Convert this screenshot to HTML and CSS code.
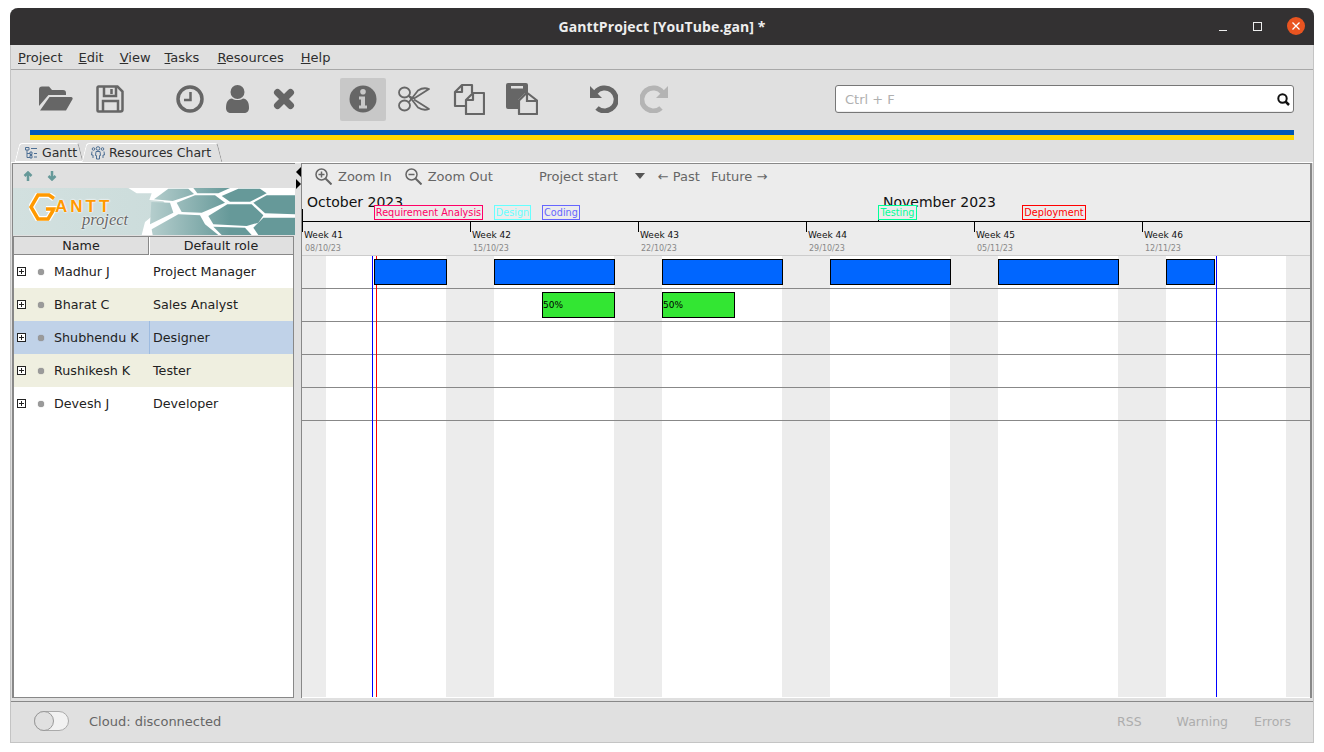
FILE: index.html
```html
<!DOCTYPE html>
<html lang="en">
<head>
    <meta charset="UTF-8">
    <title>GanttProject [YouTube.gan] *</title>
    <link rel="stylesheet" href="styles.css">
</head>
<body>
<div class="window">
    <div class="titlebar">
        <span class="title">GanttProject [YouTube.gan] *</span>
        <div class="win-btns">
            <svg class="win-min" width="9" height="9" viewBox="0 0 9 9"><path d="M0 8.500h8" stroke="#eee" stroke-width="1"/></svg>
            <svg class="win-max" width="9" height="9" viewBox="0 0 9 9"><rect x=".5" y=".5" width="8" height="8" fill="none" stroke="#eee"/></svg>
            <svg class="win-close" width="18" height="18" viewBox="0 0 18 18"><circle cx="9" cy="9" r="9" fill="#e95420"/><path d="M5.500 5.500l7 7M12.500 5.500l-7 7" stroke="#fff" stroke-width="1.300"/></svg>
        </div>
    </div>

    <div class="menubar">
        <span><u>P</u>roject</span>
        <span><u>E</u>dit</span>
        <span><u>V</u>iew</span>
        <span class="menu-tasks"><u>T</u>asks</span>
        <span><u>R</u>esources</span>
        <span class="menu-help"><u>H</u>elp</span>
    </div>

    <div class="toolbar">
        <div class="tool-group group-file">
            <div class="tool">
                <svg width="34" height="25" viewBox="0 0 34 25"><path d="M0 3.500a3 3 0 0 1 3-3h7l3 3.500h11a3 3 0 0 1 3 3V9H9.500L0 20z" fill="#666"/><path d="M10.500 11H32a1.500 1.500 0 0 1 1.500 2.200L27 24.500H1z" fill="#666"/></svg>
            </div>
            <div class="tool">
                <svg width="28" height="28" viewBox="0 0 28 28" fill="none" stroke="#666" stroke-width="2.500"><path d="M2.500 1.500h19l5 5v18a2 2 0 0 1-2 2h-22a1 1 0 0 1-1-1v-23a1 1 0 0 1 1-1z"/><path d="M8 2v9h12V2M15.500 4v5M7 26V16h15v10"/></svg>
            </div>
        </div>
        <div class="tool-group group-task">
            <div class="tool">
                <svg width="28" height="28" viewBox="0 0 28 28" fill="none" stroke="#666" stroke-width="3.500"><circle cx="14" cy="14" r="12"/><path d="M14.500 7v8H8" stroke-width="2.500"/></svg>
            </div>
            <div class="tool">
                <svg width="23" height="28" viewBox="0 0 23 28" fill="#666"><circle cx="11.500" cy="7" r="7"/><path d="M0 23c0-6 2-9 6-9.500 3 2 8 2 11 0 4 .5 6 3.500 6 9.500 0 3-2 5-5 5H5c-3 0-5-2-5-5z"/></svg>
            </div>
            <div class="tool">
                <svg width="22" height="22" viewBox="0 0 22 22"><path d="M4.500 4.500l13 13M17.500 4.500l-13 13" stroke="#666" stroke-width="7" stroke-linecap="round"/></svg>
            </div>
        </div>
        <div class="tool-group group-edit">
            <div class="tool tool-active">
                <svg width="28" height="28" viewBox="0 0 28 28"><circle cx="14" cy="14" r="13.500" fill="#666"/><circle cx="14" cy="6.800" r="2.800" fill="#c8c8c8"/><path d="M10 11.500h6v9h2v3h-8v-3h2v-6h-2z" fill="#c8c8c8"/></svg>
            </div>
            <div class="tool tool-scissors">
                <svg width="32" height="26" viewBox="0 0 32 26" fill="none" stroke="#666" stroke-width="1.800" stroke-linejoin="round"><ellipse cx="6.500" cy="6.500" rx="5.500" ry="5"/><ellipse cx="6.500" cy="19.500" rx="5.500" ry="5"/><path d="M10.500 10l5.500 2.500L31 3c-4-1.500-8-.5-11 1.500L11 16"/><path d="M11 10l9 11.500c3 2 7 3 11 1.500L16 13.500"/></svg>
            </div>
            <div class="tool">
                <svg width="32" height="32" viewBox="0 0 32 32" fill="none" stroke="#666" stroke-width="2.200" stroke-linejoin="round"><path d="M13 23H2V9l7-7h10v8"/><path d="M9 2v7H2"/><path d="M13 31V17l7-7h11v21z"/><path d="M20 10v7h-7"/></svg>
            </div>
            <div class="tool">
                <svg width="32" height="32" viewBox="0 0 32 32"><path d="M2 0h18a2 2 0 0 1 2 2v8h-3l-7 7v9H2a2 2 0 0 1-2-2V2a2 2 0 0 1 2-2z" fill="#666"/><rect x="5" y="3" width="12" height="2.500" fill="#e0e0e0"/><path d="M13 31V17.500l7-7h2l9 7V31z" fill="none" stroke="#666" stroke-width="2.200" stroke-linejoin="round"/><path d="M21 11v7h9" fill="none" stroke="#666" stroke-width="2.200"/></svg>
            </div>
        </div>
        <div class="tool-group group-undo">
            <div class="tool">
                <svg width="28" height="28" viewBox="0 0 28 28"><path d="M5.500 7.500A11.500 11.500 0 1 1 7 23" fill="none" stroke="#666" stroke-width="5"/><path d="M0 1l12 12H0z" fill="#666"/></svg>
            </div>
            <div class="tool">
                <svg width="28" height="28" viewBox="0 0 28 28"><path d="M22.500 7.500A11.500 11.500 0 1 0 21 23" fill="none" stroke="#b4b4b4" stroke-width="5"/><path d="M28 1L16 13h12z" fill="#b4b4b4"/></svg>
            </div>
        </div>
        <div class="search">
            <span class="search-hint">Ctrl + F</span>
            <svg width="13" height="13" viewBox="0 0 13 13" fill="none" stroke="#111" stroke-width="2"><circle cx="5.500" cy="5.500" r="4.200"/><path d="M8.500 8.500l3.500 3.500" stroke-width="2.500"/></svg>
        </div>
    </div>

    <div class="stripes">
        <div class="stripe-blue"></div>
        <div class="stripe-yellow"></div>
    </div>

    <div class="tabs">
        <div class="tab tab-gantt">
            <svg width="12" height="12" viewBox="0 0 12 12" fill="none" stroke="#4d6f94"><path d="M.5.500h3.500v2.500H.5zM2 3v7.500h3M2 6.500h3M5 8.500h2v2.500H5zM5 5h2v2.500H5zM6 1.500h6M9 6.500h3M9 10h3"/></svg>
            <span>Gantt</span>
        </div>
        <div class="tab tab-res">
            <svg width="14" height="14" viewBox="0 0 14 14" fill="none" stroke="#4d6f94"><circle cx="7" cy="2.500" r="1.800"/><path d="M5 5.500h4l.5 4H8.500V13h-3V9.500h-1z"/><circle cx="2.500" cy="3" r="1.300"/><path d="M1 5.500L.5 9H2v3"/><circle cx="11.500" cy="3" r="1.300"/><path d="M13 5.500l.5 3.500H12v3"/></svg>
            <span>Resources Chart</span>
        </div>
    </div>

    <div class="main">
        <div class="left-panel">
            <div class="left-tools">
                <svg width="10" height="10" viewBox="0 0 10 10" fill="none" stroke="#669999" stroke-width="2.500"><path d="M5 10V2M1.500 5L5 1.500 8.500 5"/></svg>
                <svg width="10" height="10" viewBox="0 0 10 10" fill="none" stroke="#669999" stroke-width="2.500"><path d="M5 0v8M1.500 5L5 8.500 8.500 5"/></svg>
            </div>
            <div class="banner">
                <svg class="hexes" width="282" height="47" viewBox="-411 6 846 141">
                    <defs>
                        <linearGradient id="cell" gradientUnits="userSpaceOnUse" x1="-50" y1="0" x2="240" y2="0">
                            <stop offset="0" stop-color="#c6d9d8"/>
                            <stop offset="1" stop-color="#669999"/>
                        </linearGradient>
                    </defs>
                    <path d="M-65 6H435V147H-25L-15 108 48 56 40 46-2 42 5 22H-40z" fill="#fff"/>
                    <g fill="url(#cell)">
                        <path d="M12 40L55 8H115L132 24 68 45z"/>
                        <path d="M130 6H240L205 22H142z"/>
                        <path d="M80 50L135 28H195L225 50 155 80 95 78z"/>
                        <path d="M215 30L265 8H330L350 22 300 47H240z"/>
                        <path d="M310 50L350 28H435V85L345 82z"/>
                        <path d="M175 90L232 55H305L340 88 325 110 290 120 190 115z"/>
                        <path d="M310 125L340 95H435V147H325z"/>
                        <path d="M4 48L60 50 70 80 0 115z"/>
                        <path d="M5 130L85 85 150 88 165 115 205 147H8z"/>
                        <path d="M215 147L190 122 285 125 305 147z"/>
                    </g>
                </svg>
                <svg class="logo-mark" width="28" height="28" viewBox="0 0 28 28" fill="none" stroke-linejoin="miter"><path d="M25 5.500L20 2H9L2 14l7 12h10l6-10h-8" stroke="#fff" stroke-width="6"/><path d="M25 5.500L20 2H9L2 14l7 12h10l6-10h-8" stroke="#ff9900" stroke-width="3.500"/></svg>
                <span class="logo-word">ANTT</span>
                <span class="logo-sub">project</span>
            </div>
            <div class="res-table">
                <div class="res-head">
                    <div>Name</div>
                    <div>Default role</div>
                </div>
                <div class="res-row">
                    <div class="res-name"><span class="expander"></span><span class="dot"></span>Madhur J</div>
                    <div class="res-role">Project Manager</div>
                </div>
                <div class="res-row alt">
                    <div class="res-name"><span class="expander"></span><span class="dot"></span>Bharat C</div>
                    <div class="res-role">Sales Analyst</div>
                </div>
                <div class="res-row selected">
                    <div class="res-name"><span class="expander"></span><span class="dot"></span>Shubhendu K</div>
                    <div class="res-role">Designer</div>
                </div>
                <div class="res-row alt">
                    <div class="res-name"><span class="expander"></span><span class="dot"></span>Rushikesh K</div>
                    <div class="res-role">Tester</div>
                </div>
                <div class="res-row">
                    <div class="res-name"><span class="expander"></span><span class="dot"></span>Devesh J</div>
                    <div class="res-role">Developer</div>
                </div>
            </div>
        </div>

        <div class="splitter">
            <span class="arrow-left"></span>
            <span class="arrow-right"></span>
        </div>

        <div class="chart">
            <div class="chart-tools">
                <svg class="zoom-in" width="17" height="17" viewBox="0 0 17 17" fill="none" stroke="#666" stroke-width="1.500"><circle cx="6.500" cy="6.500" r="5.500"/><path d="M10.500 10.500l6 6" stroke-width="2"/><path d="M6.500 3.500v6M3.500 6.500h6"/></svg>
                <span class="zoom-label">Zoom In</span>
                <svg class="zoom-out" width="17" height="17" viewBox="0 0 17 17" fill="none" stroke="#666" stroke-width="1.500"><circle cx="6.500" cy="6.500" r="5.500"/><path d="M10.500 10.500l6 6" stroke-width="2"/><path d="M3.500 6.500h6"/></svg>
                <span class="zoom-label">Zoom Out</span>
                <span class="project-start">Project start</span>
                <span class="caret"></span>
                <span class="past">← Past</span>
                <span class="future">Future →</span>
            </div>

            <div class="timeline">
                <span class="month month-oct">October 2023</span>
                <span class="month month-nov">November 2023</span>
                <span class="month-tick tick-oct"></span>
                <span class="month-tick tick-nov"></span>
                <span class="milestone ms-req">Requirement Analysis</span>
                <span class="milestone ms-design">Design</span>
                <span class="milestone ms-coding">Coding</span>
                <span class="milestone ms-testing">Testing</span>
                <span class="milestone ms-deploy">Deployment</span>
                <div class="weeks">
                    <div class="week"><b>Week 41</b><small>08/10/23</small></div>
                    <div class="week"><b>Week 42</b><small>15/10/23</small></div>
                    <div class="week"><b>Week 43</b><small>22/10/23</small></div>
                    <div class="week"><b>Week 44</b><small>29/10/23</small></div>
                    <div class="week"><b>Week 45</b><small>05/11/23</small></div>
                    <div class="week"><b>Week 46</b><small>12/11/23</small></div>
                </div>
            </div>

            <div class="chart-body">
                <div class="chart-row">
                    <div class="bar blue" style="left:72px;width:73px"></div>
                    <div class="bar blue" style="left:192px;width:121px"></div>
                    <div class="bar blue" style="left:360px;width:121px"></div>
                    <div class="bar blue" style="left:528px;width:121px"></div>
                    <div class="bar blue" style="left:696px;width:121px"></div>
                    <div class="bar blue" style="left:864px;width:49px"></div>
                </div>
                <div class="chart-row">
                    <div class="bar green" style="left:240px;width:73px">50%</div>
                    <div class="bar green" style="left:360px;width:73px">50%</div>
                </div>
                <div class="chart-row"></div>
                <div class="chart-row"></div>
                <div class="chart-row"></div>
                <div class="vline line-blue" style="left:70px"></div>
                <div class="vline line-red" style="left:74px"></div>
                <div class="vline line-blue" style="left:914px"></div>
            </div>
        </div>
    </div>

    <div class="statusbar">
        <span class="toggle"><span class="toggle-knob"></span></span>
        <span class="cloud">Cloud: disconnected</span>
        <span class="status-link rss">RSS</span>
        <span class="status-link warn">Warning</span>
        <span class="status-link errs">Errors</span>
    </div>
</div>
</body>
</html>
```

FILE: styles.css
```css
* {
    box-sizing: border-box;
}
body {
    margin: 0;
    padding: 8px 10px;
    background: #fff;
    font-family: "DejaVu Sans", sans-serif;
    font-size: 13px;
    color: #333;
    overflow: hidden;
}
.window {
    width: 1304px;
    height: 735px;
    display: flex;
    flex-direction: column;
    background: #e0e0e0;
    border-left: 1px solid #c4c4c4;
    border-right: 1px solid #c4c4c4;
    border-bottom: 1px solid #c4c4c4;
    border-radius: 8px 8px 0 0;
}

/* title bar */
.titlebar {
    height: 37px;
    flex: none;
    margin: 0 -1px;
    display: flex;
    align-items: center;
    justify-content: center;
    position: relative;
    background: #333132;
    border-radius: 8px 8px 0 0;
}
.title {
    font-family: "Open Sans", sans-serif;
    font-weight: 700;
    font-size: 14px;
    letter-spacing: .1px;
    color: #eee;
}
.win-btns {
    position: absolute;
    right: 9px;
    top: 9px;
    display: flex;
    align-items: center;
}
.win-min {
    margin-right: 25px;
}
.win-max {
    margin-right: 25px;
}

/* menu */
.menubar {
    height: 25px;
    flex: none;
    display: flex;
    align-items: center;
    gap: 16px;
    padding-left: 7px;
    border-bottom: 1px solid #a8a8a8;
    color: #2e2e2e;
}
.menu-tasks {
    margin: 0 2px 0 -2px;
}
.menu-help {
    margin-left: 1px;
}

/* toolbar */
.toolbar {
    height: 60px;
    flex: none;
    display: flex;
    align-items: flex-start;
    padding: 8px 19px 0 22px;
}
.tool-group {
    display: flex;
}
.tool {
    width: 46px;
    height: 43px;
    padding-bottom: 2px;
    display: flex;
    align-items: center;
    justify-content: center;
    border-radius: 2px;
}
.tool-active {
    background: #c8c8c8;
}
.tool-scissors {
    margin: 0 2px 0 -2px;
}
.group-file {
    gap: 8px;
}
.group-task {
    gap: 1px;
    margin-left: 34px;
}
.group-edit {
    gap: 7px;
    margin-left: 33px;
}
.group-undo {
    gap: 4px;
    margin-left: 36px;
}
.search {
    width: 459px;
    height: 28px;
    margin: 7px 0 0 auto;
    padding: 0 3px 0 9px;
    display: flex;
    align-items: center;
    justify-content: space-between;
    background: #fff;
    border: 1px solid #777;
    border-radius: 3px;
    box-shadow: inset 0 -1px 0 #eee;
}
.search-hint {
    color: #b0b0b0;
}

.stripes {
    flex: none;
    margin: 0 19px;
}
.stripe-blue {
    height: 5px;
    background: #0057b7;
}
.stripe-yellow {
    height: 5px;
    background: #ffd700;
}

/* tabs */
.tabs {
    height: 19px;
    flex: none;
    margin-top: 3px;
    padding-left: 4px;
    display: flex;
    font-size: 12.500px;
}
.tab {
    position: relative;
    display: flex;
    align-items: center;
    height: 19px;
    color: #2e2e2e;
}
.tab::before,
.tab::after {
    content: "";
    position: absolute;
    top: 0;
    bottom: 0;
    width: 50%;
    border-top: 1px solid #fff;
}
.tab::before {
    left: 2px;
    border-left: 1px solid #fff;
    border-radius: 3px 0 0 0;
    transform: skewX(-14deg);
}
.tab::after {
    right: 2px;
    border-right: 1px solid #999;
    border-radius: 0 3px 0 0;
    transform: skewX(14deg);
}
.tab-gantt {
    width: 67px;
    padding-left: 10px;
    gap: 5px;
    box-shadow: inset 0 -1px 0 #fff;
}
.tab-res {
    width: 140px;
    padding-left: 9px;
    gap: 4px;
}

/* main area */
.main {
    height: 539px;
    flex: none;
    display: flex;
    padding: 0 1px 3px 1px;
    border-top: 1px solid #fff;
}

.left-panel {
    width: 283px;
    flex: none;
    display: flex;
    flex-direction: column;
    border-top: 1px solid #888;
    border-left: 1px solid #888;
}
.left-tools {
    height: 24px;
    flex: none;
    display: flex;
    align-items: center;
    gap: 14px;
    padding-left: 10px;
}
.banner {
    height: 47px;
    flex: none;
    position: relative;
    overflow: hidden;
    background: linear-gradient(90deg, #d2e0df 0%, #c6d9d8 100%);
}
.hexes {
    position: absolute;
    left: 0;
    top: 0;
}
.logo-mark {
    position: absolute;
    left: 16px;
    top: 5px;
}
.logo-word {
    position: absolute;
    left: 42px;
    top: 10px;
    font-family: "Liberation Sans", sans-serif;
    font-weight: 700;
    font-size: 17px;
    line-height: 18px;
    letter-spacing: 3px;
    color: #ff9900;
    text-shadow: 0 0 2px #fff, 0 0 2px #fff;
}
.logo-sub {
    position: absolute;
    left: 69px;
    top: 23px;
    font-family: "Liberation Serif", serif;
    font-style: italic;
    font-size: 16.500px;
    line-height: 18px;
    color: #666;
    text-shadow: 0 0 2px #fff, 0 0 2px #fff;
}
.res-table {
    flex: 1;
    width: 281px;
    margin-top: 1px;
    background: #fff;
    border: 1px solid #888;
    font-size: 12.700px;
}
.res-head {
    height: 18px;
    display: grid;
    grid-template-columns: 134px 1fr;
    background: #e0e0e0;
    border-bottom: 1px solid #888;
    line-height: 18px;
    text-align: center;
    color: #222;
}
.res-head div + div {
    border-left: 1px solid #888;
    box-shadow: inset 1px 0 0 #fff;
}
.res-row {
    height: 33px;
    display: grid;
    grid-template-columns: 135px 1fr;
    align-items: stretch;
    line-height: 33px;
    color: #222;
}
.alt {
    background: #efefe0;
}
.selected {
    background: #c0d2e8;
}
.selected .res-role {
    border-left: 1px solid #9dbbe0;
    padding-left: 3px;
}
.res-name {
    display: flex;
    align-items: center;
    padding-left: 3px;
}
.res-role {
    padding-left: 4px;
}
.expander {
    position: relative;
    width: 9px;
    height: 9px;
    flex: none;
    background: #fff;
    border: 1px solid #222;
}
.expander::before {
    content: "";
    position: absolute;
    left: 1px;
    top: 3px;
    width: 5px;
    height: 1px;
    background: #222;
}
.expander::after {
    content: "";
    position: absolute;
    left: 3px;
    top: 1px;
    width: 1px;
    height: 5px;
    background: #222;
}
.dot {
    width: 6px;
    height: 6px;
    flex: none;
    margin: 0 10px 0 12px;
    border-radius: 50%;
    background: #9a9a9a;
    box-shadow: 0 0 1px #777;
}

.splitter {
    width: 6px;
    flex: none;
    display: flex;
    flex-direction: column;
    gap: 2px;
    padding-top: 4px;
}
.arrow-left {
    width: 0;
    height: 0;
    margin-left: 1px;
    border: 5px solid transparent;
    border-left: none;
    border-right: 5px solid #000;
}
.arrow-right {
    width: 0;
    height: 0;
    margin-left: 1px;
    border: 5px solid transparent;
    border-right: none;
    border-left: 5px solid #000;
}

/* chart */
.chart {
    flex: 1;
    min-width: 0;
    display: flex;
    flex-direction: column;
    background: #fff;
    border-top: 1px solid #888;
    border-left: 1px solid #888;
    border-right: 2px solid #888;
}
.chart-tools {
    height: 26px;
    flex: none;
    display: flex;
    align-items: center;
    padding: 0 0 2px 13px;
    background: #ececec;
    color: #666;
}
.zoom-label {
    margin-left: 6px;
}
.zoom-out {
    margin-left: 13px;
}
.project-start {
    margin-left: 46px;
}
.caret {
    margin-left: 17px;
    border: 5px solid transparent;
    border-top: 6px solid #555;
    border-bottom: none;
}
.past {
    margin-left: 13px;
}
.future {
    margin-left: 11px;
}
.timeline {
    height: 65px;
    flex: none;
    position: relative;
    width: 1008px;
    padding-top: 31px;
    background: #ececec;
}
.month {
    position: absolute;
    top: 3px;
    font-size: 14px;
    line-height: 18px;
    color: #111;
}
.month-oct {
    left: 5px;
}
.month-nov {
    left: 581px;
}
.month-tick {
    position: absolute;
    top: 19px;
    width: 1px;
    height: 12px;
    background: #000;
}
.tick-oct {
    left: 0;
}
.tick-nov {
    left: 576px;
}
.milestone {
    position: absolute;
    top: 15px;
    height: 15px;
    padding: 0;
    font-size: 9.700px;
    line-height: 14px;
    white-space: nowrap;
    background: #ececec;
    border: 1px solid;
    text-align: center;
}
.ms-req {
    left: 72px;
    width: 109px;
    color: #ff0066;
}
.ms-design {
    left: 192px;
    width: 37px;
    color: #66ffff;
}
.ms-coding {
    left: 240px;
    width: 38px;
    color: #6666ff;
}
.ms-testing {
    left: 576px;
    width: 39px;
    color: #00ff99;
}
.ms-deploy {
    left: 720px;
    width: 64px;
    color: #ff0000;
}
.weeks {
    display: flex;
    border-top: 1px solid #000;
}
.week {
    position: relative;
    width: 168px;
    flex: none;
    padding: 8px 0 0 2px;
}
.week::before {
    content: "";
    position: absolute;
    left: 0;
    top: 0;
    width: 1px;
    height: 10px;
    background: #000;
}
.week b {
    display: block;
    font-weight: 400;
    font-size: 9px;
    line-height: 11px;
    color: #111;
}
.week small {
    display: block;
    margin: 3px 0 0 1px;
    font-size: 8px;
    line-height: 10px;
    color: #888;
}
.chart-body {
    flex: 1;
    position: relative;
    width: 1008px;
    margin-bottom: 1px;
    border-top: 1px solid #ccc;
    overflow: hidden;
    background: repeating-linear-gradient(90deg, #ececec 0, #ececec 24px, #fff 24px, #fff 144px, #ececec 144px, #ececec 168px);
}
.chart-row {
    height: 33px;
    border-bottom: 1px solid #888;
    position: relative;
}
.bar {
    position: absolute;
    z-index: 1;
    top: 3px;
    height: 26px;
    border: 1px solid #000;
    font-size: 9px;
    line-height: 24px;
    color: #000;
}
.blue {
    background: #0066ff;
}
.green {
    background: #33e633;
}
.vline {
    position: absolute;
    top: 0;
    bottom: 0;
    width: 1px;
}
.line-blue {
    background: #0000ff;
}
.line-red {
    background: #ff0000;
}

/* status bar */
.statusbar {
    flex: 1;
    display: flex;
    align-items: center;
    padding: 0 22px 2px 23px;
    border-top: 1px solid #888;
}
.toggle {
    position: relative;
    width: 35px;
    height: 20px;
    background: #f2f2f2;
    border: 1px solid #aaa;
    border-radius: 10px;
}
.toggle-knob {
    position: absolute;
    left: -1px;
    top: -1px;
    width: 20px;
    height: 20px;
    background: #e0e0e0;
    border: 1px solid #999;
    border-radius: 50%;
}
.cloud {
    margin-left: 20px;
    color: #666;
}
.status-link {
    color: #adadad;
    font-size: 12.500px;
}
.rss {
    margin-left: auto;
}
.warn {
    margin-left: 35px;
}
.errs {
    margin-left: 26px;
}
```
